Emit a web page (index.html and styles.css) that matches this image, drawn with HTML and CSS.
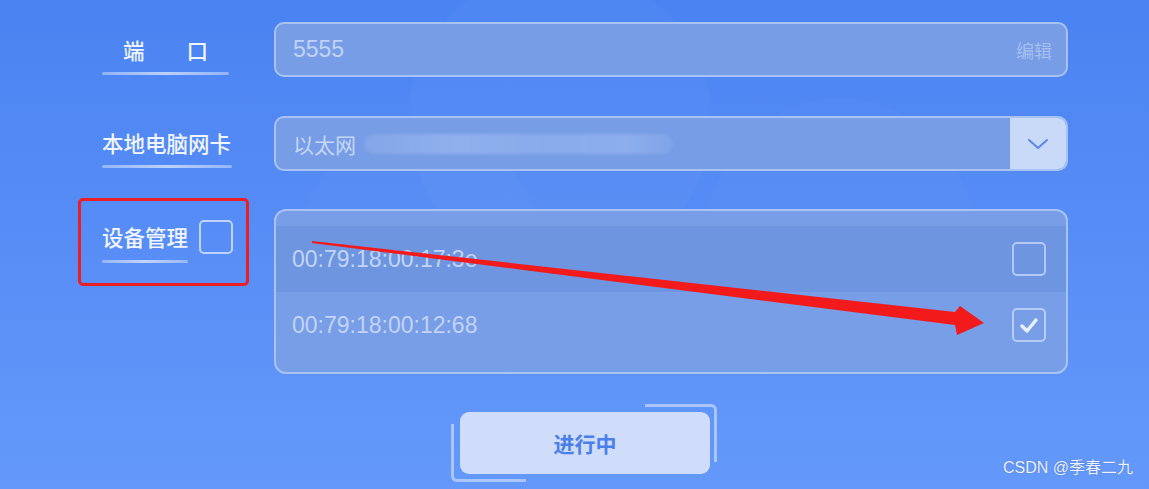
FILE: index.html
```html
<!DOCTYPE html>
<html lang="zh">
<head>
<meta charset="utf-8">
<title>设备管理</title>
<link rel="stylesheet" href="styles.css">
</head>
<body>
<div class="page">
  <div class="row row-port">
    <div class="label">
      <div class="label-text spaced"><span>端</span><span>口</span></div>
      <div class="line w127"></div>
    </div>
    <div class="field">
      <span class="value">5555</span>
      <span class="edit">编辑</span>
    </div>
  </div>

  <div class="row row-nic">
    <div class="label">
      <div class="label-text">本地电脑网卡</div>
      <div class="line w130"></div>
    </div>
    <div class="field field-select">
      <span class="value cjk">以太网</span>
      <span class="blurred"></span>
      <span class="dropdown">
        <svg width="22" height="12" viewBox="0 0 22 12"><path d="M2 2 L11 10 L20 2" fill="none" stroke="#5a89e4" stroke-width="2" stroke-linecap="round" stroke-linejoin="round"/></svg>
      </span>
    </div>
  </div>

  <div class="row row-dev">
    <div class="label label-dev">
      <div class="label-head">
        <span class="label-text">设备管理</span>
        <span class="check"></span>
      </div>
      <div class="line w86"></div>
    </div>
    <div class="list">
      <div class="item item-dark">
        <span class="mac">00:79:18:00:17:3e</span>
        <span class="check"></span>
      </div>
      <div class="item">
        <span class="mac">00:79:18:00:12:68</span>
        <span class="check checked">
          <svg width="30" height="30" viewBox="0 0 30 30"><path d="M8 16 L13 21 L22 10" fill="none" stroke="#e8effd" stroke-width="3.5" stroke-linecap="round" stroke-linejoin="round"/></svg>
        </span>
      </div>
    </div>
  </div>

  <div class="row row-btn">
    <div class="btn-wrap">
      <div class="btn">进行中</div>
    </div>
  </div>

  <div class="red-box"></div>
  <svg class="arrow" width="1149" height="489" viewBox="0 0 1149 489">
    <path d="M312 241 L955 312 L960 306 L984 323 L957 335 L955 325 L312 243 Z" fill="#f21a1a"/>
  </svg>
  <div class="watermark">CSDN @季春二九</div>
</div>
</body>
</html>
```

FILE: styles.css
```css
html, body {
  margin: 0;
  padding: 0;
}
body {
  width: 1149px;
  height: 489px;
  overflow: hidden;
  font-family: "Liberation Sans", "Noto Sans CJK SC", sans-serif;
  background:
    radial-gradient(circle at 560px 120px, rgba(255,255,255,0.022) 0, rgba(255,255,255,0.022) 150px, rgba(255,255,255,0) 153px),
    radial-gradient(circle at 840px 230px, rgba(255,255,255,0.02) 0, rgba(255,255,255,0.02) 130px, rgba(255,255,255,0) 133px),
    radial-gradient(circle at 420px 250px, rgba(255,255,255,0.015) 0, rgba(255,255,255,0.015) 120px, rgba(255,255,255,0) 123px),
    linear-gradient(180deg, #4a83f2 0%, #568cf5 45%, #6499fb 100%);
}
.page {
  position: relative;
  width: 1149px;
  height: 489px;
  padding-top: 22px;
  box-sizing: border-box;
}
.row {
  display: flex;
  align-items: flex-start;
  margin-left: 102px;
}
.row-nic { margin-top: 39px; }
.row-dev { margin-top: 38px; }
.row-btn { margin-top: 38px; }

.label {
  width: 172px;
  flex: none;
  display: flex;
  flex-direction: column;
}
.row-port .label { margin-top: 14px; }
.row-nic .label { margin-top: 13px; }
.label-dev { margin-top: 11px; }

.label-text {
  font-family: "Noto Sans CJK SC", sans-serif;
  font-size: 21.5px;
  line-height: 28px;
  font-weight: 500;
  color: #f0f5ff;
  white-space: nowrap;
}
.spaced {
  display: flex;
  justify-content: center;
  gap: 42px;
  width: 127px;
}
.line {
  height: 3px;
  margin-top: 8px;
  border-radius: 2px;
  background: linear-gradient(90deg, rgba(210,225,255,0.5), rgba(230,238,255,0.72) 50%, rgba(210,225,255,0.5));
}
.w127 { width: 127px; }
.w130 { width: 130px; }
.w86 { width: 86px; margin-top: 6px; }

.label-head {
  display: flex;
  align-items: center;
  gap: 11px;
  height: 34px;
}

.field {
  width: 794px;
  height: 55px;
  box-sizing: border-box;
  border: 2px solid #a8c3f3;
  border-radius: 10px;
  background: #769de6;
  display: flex;
  align-items: center;
  justify-content: space-between;
  padding: 0 14px 0 17px;
}
.value {
  font-size: 23px;
  color: #c0d3f5;
}
.value.cjk {
  font-family: "Noto Sans CJK SC", sans-serif;
  font-size: 21px;
  color: #c6d6f5;
}
.edit {
  font-family: "Noto Sans CJK SC", sans-serif;
  font-size: 18px;
  color: #a6bfee;
}
.field-select {
  justify-content: flex-start;
  padding-right: 0;
  overflow: hidden;
}
.blurred {
  width: 309px;
  height: 20px;
  margin-left: 8px;
  border-radius: 10px;
  background: linear-gradient(90deg, rgba(160,188,238,0.3), rgba(175,200,244,0.45) 30%, rgba(165,192,240,0.4) 60%, rgba(172,198,243,0.42) 85%, rgba(160,188,238,0.25));
  filter: blur(1.5px);
}
.dropdown {
  margin-left: auto;
  width: 56px;
  height: 100%;
  background: #c9d9f8;
  display: flex;
  align-items: center;
  justify-content: center;
  border-radius: 0 8px 8px 0;
}

.check {
  width: 34px;
  height: 34px;
  box-sizing: border-box;
  border: 2px solid rgba(225,235,255,0.75);
  border-radius: 5px;
  display: flex;
  align-items: center;
  justify-content: center;
  flex: none;
}
.item .check {
  border-color: rgba(210,225,252,0.7);
}

.list {
  width: 794px;
  height: 165px;
  box-sizing: border-box;
  border: 2px solid #a8c3f3;
  border-radius: 12px;
  background: #779ee6;
  padding: 15px 0;
}
.item {
  height: 66px;
  display: flex;
  align-items: center;
  justify-content: space-between;
  padding: 0 20px 0 16px;
}
.item-dark {
  background: #6e95e0;
}
.mac {
  font-size: 23px;
  color: #c3d4f4;
}

.btn-wrap {
  position: relative;
  margin-left: 358px;
}
.btn {
  width: 250px;
  height: 62px;
  border-radius: 9px;
  background: #cfddfa;
  color: #4b80ea;
  font-family: "Noto Sans CJK SC", sans-serif;
  font-size: 21px;
  font-weight: 700;
  display: flex;
  align-items: center;
  justify-content: center;
}
.btn-wrap::before {
  content: "";
  position: absolute;
  top: -8px;
  right: -7px;
  width: 72px;
  height: 58px;
  box-sizing: border-box;
  border-top: 3px solid rgba(195,214,252,0.75);
  border-right: 3px solid rgba(195,214,252,0.75);
  border-top-right-radius: 6px;
}
.btn-wrap::after {
  content: "";
  position: absolute;
  left: -9px;
  bottom: -8px;
  width: 75px;
  height: 58px;
  box-sizing: border-box;
  border-left: 3px solid rgba(195,214,252,0.75);
  border-bottom: 3px solid rgba(195,214,252,0.75);
  border-bottom-left-radius: 6px;
}

.red-box {
  position: absolute;
  left: 78px;
  top: 198px;
  width: 171px;
  height: 88px;
  box-sizing: border-box;
  border: 3px solid #ea1e26;
  border-radius: 5px;
}
.arrow {
  position: absolute;
  left: 0;
  top: 0;
  pointer-events: none;
}
.watermark {
  position: absolute;
  right: 16px;
  bottom: 11px;
  font-family: "Liberation Sans", "Noto Sans CJK SC", sans-serif;
  font-size: 16px;
  color: #eef3ff;
  text-shadow: 0 0 1px rgba(40,60,110,0.6);
}
```
